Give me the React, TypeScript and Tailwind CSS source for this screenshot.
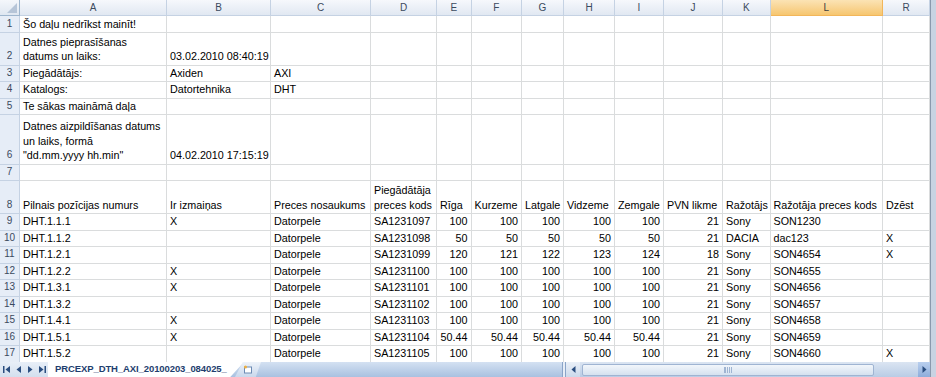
import React from "react"

const cols = ["A", "B", "C", "D", "E", "F", "G", "H", "I", "J", "K", "L", "R"]

type Row = { n: number; cells: string[] }

const num = [4, 5, 6, 7, 8, 9]

const rows: Row[] = [
  { n: 1, cells: ["Šo daļu nedrīkst mainīt!"] },
  { n: 2, cells: ["Datnes pieprasīšanas\ndatums un laiks:", "03.02.2010 08:40:19"] },
  { n: 3, cells: ["Piegādātājs:", "Axiden", "AXI"] },
  { n: 4, cells: ["Katalogs:", "Datortehnika", "DHT"] },
  { n: 5, cells: ["Te sākas maināmā daļa"] },
  { n: 6, cells: ["Datnes aizpildīšanas datums\nun laiks, formā\n\"dd.mm.yyyy hh.min\"", "04.02.2010 17:15:19"] },
  { n: 7, cells: [] },
  {
    n: 8,
    cells: [
      "Pilnais pozīcijas numurs",
      "Ir izmaiņas",
      "Preces nosaukums",
      "Piegādātāja\npreces kods",
      "Rīga",
      "Kurzeme",
      "Latgale",
      "Vidzeme",
      "Zemgale",
      "PVN likme",
      "Ražotājs",
      "Ražotāja preces kods",
      "Dzēst",
    ],
  },
  { n: 9, cells: ["DHT.1.1.1", "X", "Datorpele", "SA1231097", "100", "100", "100", "100", "100", "21", "Sony", "SON1230", ""] },
  { n: 10, cells: ["DHT.1.1.2", "", "Datorpele", "SA1231098", "50", "50", "50", "50", "50", "21", "DACIA", "dac123", "X"] },
  { n: 11, cells: ["DHT.1.2.1", "", "Datorpele", "SA1231099", "120", "121", "122", "123", "124", "18", "Sony", "SON4654", "X"] },
  { n: 12, cells: ["DHT.1.2.2", "X", "Datorpele", "SA1231100", "100", "100", "100", "100", "100", "21", "Sony", "SON4655", ""] },
  { n: 13, cells: ["DHT.1.3.1", "X", "Datorpele", "SA1231101", "100", "100", "100", "100", "100", "21", "Sony", "SON4656", ""] },
  { n: 14, cells: ["DHT.1.3.2", "", "Datorpele", "SA1231102", "100", "100", "100", "100", "100", "21", "Sony", "SON4657", ""] },
  { n: 15, cells: ["DHT.1.4.1", "X", "Datorpele", "SA1231103", "100", "100", "100", "100", "100", "21", "Sony", "SON4658", ""] },
  { n: 16, cells: ["DHT.1.5.1", "X", "Datorpele", "SA1231104", "50.44", "50.44", "50.44", "50.44", "50.44", "21", "Sony", "SON4659", ""] },
  { n: 17, cells: ["DHT.1.5.2", "", "Datorpele", "SA1231105", "100", "100", "100", "100", "100", "21", "Sony", "SON4660", "X"] },
]

function Cell({ text, right }: { text: string; right: boolean }) {
  return (
    <div
      className={
        "flex min-h-0 items-end overflow-hidden border-r border-b border-[#dadcdd] px-[3px] pb-[1px] leading-[14.5px] whitespace-pre " +
        (right ? "justify-end text-right" : "")
      }
    >
      {text}
    </div>
  )
}

function Grid() {
  return (
    <div
      className="grid grid-cols-[20px_147px_104px_100px_66px_34.5px_50.5px_42px_51px_49px_59px_47.5px_112.5px_47px] grid-rows-[16px_17px_32.5px_16.5px_16.5px_16.5px_49.5px_16.5px_33px_repeat(9,16.5px)] text-[10.75px] text-black"
      style={{ fontFamily: '"Liberation Sans", Arial, sans-serif' }}
    >
      <div className="relative border-r border-b border-[#9eb6ce] bg-gradient-to-b from-[#f4f7fb] to-[#dfe7f1]">
        <div className="absolute right-[2px] bottom-[2px] h-[10px] w-[10px] bg-[#b6c5d8] [clip-path:polygon(100%_0,100%_100%,0_100%)]" />
      </div>
      {cols.map((c) => (
        <div
          key={c}
          className={
            "flex items-center justify-center border-r border-b text-[10px] " +
            (c === "L"
              ? "border-[#f2b65a] bg-gradient-to-b from-[#fbe3b4] to-[#f6c66f] text-[#3d3d3d]"
              : "border-[#c5d2e3] bg-gradient-to-b from-[#f6f8fc] to-[#e1e8f2] text-[#3b4a5e]")
          }
        >
          {c}
        </div>
      ))}
      {rows.map((r) => (
        <React.Fragment key={r.n}>
          <div className="flex min-h-0 items-end justify-center overflow-hidden border-r border-b border-[#c5d2e3] bg-[#e6edf7] pb-[1px] text-[10px] leading-[14.5px] text-[#3b4a5e]">
            {r.n}
          </div>
          {cols.map((c, i) => {
            const t = r.cells[i] ?? ""
            const right = r.n >= 9 && num.includes(i)
            return <Cell key={c} text={t} right={right} />
          })}
        </React.Fragment>
      ))}
    </div>
  )
}

function NavArrows() {
  return (
    <div className="flex h-full w-[48px] items-center gap-[3px] bg-gradient-to-b from-[#e8eff8] to-[#d3dfee] pl-[3px]">
      <svg width="9" height="7" viewBox="0 0 9 7">
        <rect x="0" y="0" width="1.5" height="7" fill="#2b4e80" />
        <polygon points="7,0 7,7 2.5,3.5" fill="#2b4e80" />
      </svg>
      <svg width="8" height="7" viewBox="0 0 8 7">
        <polygon points="6,0 6,7 1.5,3.5" fill="#2b4e80" />
      </svg>
      <svg width="8" height="7" viewBox="0 0 8 7">
        <polygon points="2,0 2,7 6.5,3.5" fill="#2b4e80" />
      </svg>
      <svg width="9" height="7" viewBox="0 0 9 7">
        <polygon points="2,0 2,7 6.5,3.5" fill="#2b4e80" />
        <rect x="7.5" y="0" width="1.5" height="7" fill="#2b4e80" />
      </svg>
    </div>
  )
}

function TabBar() {
  return (
    <div
      className="flex h-[15px] w-[930px] items-stretch bg-gradient-to-b from-[#d4e1f2] to-[#a9c1e0]"
      style={{ fontFamily: '"Liberation Sans", Arial, sans-serif' }}
    >
      <NavArrows />
      <div className="flex w-[196px] items-center bg-white pl-[7px] text-[9.5px] font-bold tracking-[-0.1px] text-[#1e3e6e] [clip-path:polygon(0_0,100%_0,93%_100%,0_100%)]">
        PRCEXP_DTH_AXI_20100203_084025_
      </div>
      <div className="-ml-[9px] flex w-[26px] items-center justify-center bg-gradient-to-b from-[#eef3fa] to-[#c9d8ec] [clip-path:polygon(30%_0,100%_0,80%_100%,0_100%)]">
        <svg width="10" height="9" viewBox="0 0 10 9">
          <rect x="1.5" y="2" width="7" height="6" fill="#fff" stroke="#6d8bb4" strokeWidth="1" />
          <circle cx="2.5" cy="2" r="1.5" fill="#f0b040" />
        </svg>
      </div>
      <div className="flex-1" />
      <div className="flex w-[368px] items-stretch">
        <div className="w-[4px] border-x border-[#8aa4c8] bg-[#e6edf7]" />
        <div className="flex w-[14px] items-center justify-center bg-gradient-to-b from-[#eaf0f8] to-[#cbd9eb]">
          <svg width="5" height="7" viewBox="0 0 5 7">
            <polygon points="4.5,0 4.5,7 0.5,3.5" fill="#2b4e80" />
          </svg>
        </div>
        <div className="flex flex-1 items-center bg-gradient-to-b from-[#dbe5f2] to-[#b9cce5] px-[2px]">
          <div className="flex h-[12px] w-[292px] items-center justify-center rounded-[2px] border border-[#9fb4d2] bg-gradient-to-b from-[#f2f6fb] to-[#d5e1ef]">
            <div className="h-[6px] w-[8px] border-x border-[#9fb4d2] bg-[repeating-linear-gradient(90deg,#9fb4d2_0,#9fb4d2_1px,transparent_1px,transparent_2px)]" />
          </div>
        </div>
        <div className="flex w-[12px] items-center justify-center bg-gradient-to-b from-[#b9cfee] to-[#8eaddb]">
          <svg width="5" height="7" viewBox="0 0 5 7">
            <polygon points="0.5,0 0.5,7 4.5,3.5" fill="#2b4e80" />
          </svg>
        </div>
      </div>
    </div>
  )
}

export default function App() {
  return (
    <div className="flex h-[377px] w-[936px] overflow-hidden bg-white">
      <div className="flex w-[930px] flex-col">
        <div className="h-[362px] overflow-hidden">
          <Grid />
        </div>
        <TabBar />
      </div>
      <div className="w-[6px] border-l border-[#8b99ad] bg-[#c8d3e2]" />
    </div>
  )
}
